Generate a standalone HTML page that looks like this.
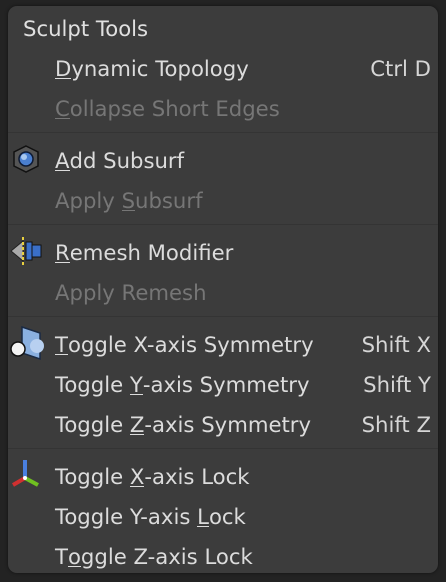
<!DOCTYPE html><html><head><style>
body{margin:0;width:446px;height:582px;background:#232323;overflow:hidden;font-family:"DejaVu Sans","Liberation Sans",sans-serif;position:relative}
.p{position:absolute;left:8px;top:6px;width:430px;height:567px;background:#3c3c3c;border-radius:9px;box-shadow:0 0 3px #111}
.t{position:absolute;font-size:21.2px;color:#dcdcdc;line-height:24px;white-space:nowrap}
.d{color:#767676}
.k{position:absolute;right:15px;font-size:21.2px;color:#d6d6d6;line-height:24px}
u{text-decoration:none;border-bottom:1.5px solid currentColor;display:inline-block;line-height:19px}
.s{position:absolute;left:8px;width:430px;height:1px;background:#343434}
svg{position:absolute}
</style></head><body>
<div class="p"></div>
<div class="t" style="left:23px;top:17px;color:#e0e0e0">Sculpt Tools</div>
<div class="t" style="left:55px;top:57px"><u>D</u>ynamic Topology</div><div class="k" style="top:57px">Ctrl D</div>
<div class="t d" style="left:55px;top:97px"><u>C</u>ollapse Short Edges</div>
<div class="s" style="top:132px"></div>
<svg style="left:11px;top:144px" width="30" height="30"><polygon points="15,2 27,8 27,22 15,28 3,22 3,8" fill="#555" stroke="#111" stroke-width="1.5"/><circle cx="15" cy="15" r="7" fill="#4a7fd0" stroke="#0e1a33" stroke-width="1.5"/><circle cx="13" cy="13" r="3" fill="#a8c8f0"/></svg>
<div class="t" style="left:55px;top:149px"><u>A</u>dd Subsurf</div>
<div class="t d" style="left:55px;top:189px">Apply <u>S</u>ubsurf</div>
<div class="s" style="top:224px"></div>
<svg style="left:9px;top:234px" width="34" height="34"><polygon points="2,17 14,7 14,27" fill="#aaa" stroke="#222"/><rect x="17" y="8" width="6" height="18" fill="#3a6fc8" stroke="#111"/><rect x="23" y="11" width="9" height="12" fill="#3a6fc8" stroke="#111"/><line x1="14" y1="3" x2="14" y2="31" stroke="#e8d040" stroke-width="2" stroke-dasharray="3,2"/></svg>
<div class="t" style="left:55px;top:241px"><u>R</u>emesh Modifier</div>
<div class="t d" style="left:55px;top:281px">Apply Remesh</div>
<div class="s" style="top:316px"></div>
<svg style="left:8px;top:325px" width="36" height="36"><polygon points="14,2 32,8 32,34 14,28" fill="#8ab0e0" stroke="#1a2a44" stroke-width="1.5"/><circle cx="29" cy="21" r="7" fill="#b8d0f0"/><circle cx="10" cy="24" r="7" fill="#f4f4f4" stroke="#111" stroke-width="1.5"/></svg>
<div class="t" style="left:55px;top:333px"><u>T</u>oggle X-axis Symmetry</div><div class="k" style="top:333px">Shift X</div>
<div class="t" style="left:55px;top:373px">Toggle <u>Y</u>-axis Symmetry</div><div class="k" style="top:373px">Shift Y</div>
<div class="t" style="left:55px;top:413px">Toggle <u>Z</u>-axis Symmetry</div><div class="k" style="top:413px">Shift Z</div>
<div class="s" style="top:448px"></div>
<svg style="left:8px;top:456px" width="36" height="34"><line x1="17" y1="4" x2="17" y2="22" stroke="#4a80e0" stroke-width="4"/><line x1="17" y1="22" x2="5" y2="29" stroke="#d03030" stroke-width="4"/><line x1="17" y1="22" x2="30" y2="29" stroke="#70c020" stroke-width="4"/><circle cx="17" cy="22" r="2" fill="#fff"/></svg>
<div class="t" style="left:55px;top:465px">Toggle <u>X</u>-axis Lock</div>
<div class="t" style="left:55px;top:505px">Toggle Y-axis <u>L</u>ock</div>
<div class="t" style="left:55px;top:545px">T<u>o</u>ggle Z-axis Lock</div>
</body></html>
